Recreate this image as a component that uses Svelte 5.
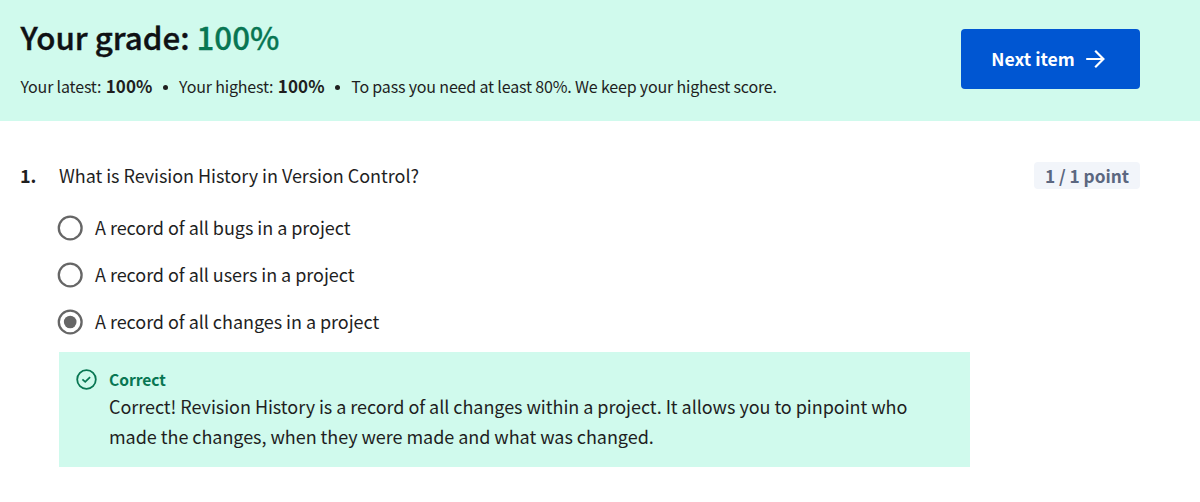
<script>
  const options = ['A record of all bugs in a project', 'A record of all users in a project', 'A record of all changes in a project'];
  const selected = 2;
</script>

<div class="page">
  <header>
    <div class="grade">
      <h1>Your grade: <span>100%</span></h1>
      <div class="summary"><span>Your latest: <b>100%</b></span><i></i><span>Your highest: <b>100%</b></span><i></i><span>To pass you need at least 80%. We keep your highest score.</span></div>
    </div>
    <button class="next"><span>Next item</span>
      <svg width="19" height="20" viewBox="0 0 19 20" fill="none" stroke="currentColor" stroke-width="2.2"><path d="M0.2 10H17M9.2 1.8l8.2 8.2-8.2 8.2" /></svg>
    </button>
  </header>
  <main>
    <div class="num">1.</div>
    <section>
      <div class="prompt"><span>What is Revision History in Version Control?</span><span class="points">1 / 1 point</span></div>
      <div class="options">
        {#each options as option, i}
          <div class="option">
            <svg width="26" height="26" viewBox="0 0 26 26"><circle cx="13.2" cy="13" r="11.4" fill="none" stroke="#666" stroke-width="2.3" />{#if i === selected}<circle cx="13.2" cy="13" r="6.3" fill="#666" />{/if}</svg>
            <span>{option}</span>
          </div>
        {/each}
      </div>
      <div class="feedback">
        <svg width="21" height="21" viewBox="0 0 21 21" fill="none" stroke="#087653" stroke-width="1.8"><circle cx="10.5" cy="10.5" r="9.3" /><path d="M6.4 10.3l2.8 2.5 4.9-4.6" /></svg>
        <div><strong>Correct</strong>
          <p>Correct! Revision History is a record of all changes within a project. It allows you to pinpoint who<br />made the changes, when they were made and what was changed.</p>
        </div>
      </div>
    </section>
  </main>
</div>

<style>
  :global(body) { background: #fff; }
  .page { width: 1200px; height: 502px; overflow: hidden; box-sizing: border-box; font-family: "Noto Sans CJK SC", sans-serif; color: #1f1f1f; font-size: 18px; letter-spacing: -0.043px; white-space: nowrap; }
  header { height: 121px; box-sizing: border-box; background: #d0faed; display: flex; justify-content: space-between; padding: 0 60px 0 20.5px; }
  h1 { margin: 17px 0 0; font-size: 31.3px; line-height: 40px; font-weight: 500; color: #0f1114; letter-spacing: 0; -webkit-text-stroke: 0.4px #0f1114; }
  h1 span { color: #087653; -webkit-text-stroke: 0.3px #087653; }
  .summary { margin: 17px 0 0; font-size: 16px; line-height: 24px; letter-spacing: -0.17px; display: flex; align-items: center; }
  .summary > span { height: 24px; }
  b { font-size: 17px; letter-spacing: 0.1px; line-height: 20px; margin-left: 1px; }
  i { width: 5px; height: 5px; border-radius: 50%; background: #1f1f1f; margin: 2px 11px 0 10.5px; }
  .next { margin-top: 29px; width: 179px; height: 60px; border: 0; border-radius: 4px; background: #0056d2; color: #fff; font: 700 17.6px "Noto Sans CJK SC", sans-serif; display: flex; align-items: center; justify-content: center; gap: 11px; padding: 0 5px 0 0; }
  .next span { margin-top: -2px; }
  main { display: flex; padding: 39px 60px 0 20px; }
  .num { width: 39px; font-weight: 700; line-height: 30px; }
  section { flex: 1; }
  .prompt { display: flex; justify-content: space-between; line-height: 30px; }
  .points { height: 27px; line-height: 27px; margin-top: 2px; width: 106px; text-align: center; background: #f2f5fa; border-radius: 4px; color: #5b6780; font-size: 17.3px; font-weight: 700; }
  .options { padding-top: 14px; }
  .option { display: flex; align-items: center; height: 47px; gap: 12px; margin-left: -2px; }
  .option span { margin-top: -2px; }
  .feedback { margin-top: 7px; width: 911px; height: 115px; box-sizing: border-box; background: #d0faed; display: flex; padding: 12px 17px; gap: 12px; }
  .feedback > svg { margin-top: 5px; }
  strong { color: #087653; display: block; font-size: 15.6px; line-height: 28px; padding-top: 1px; }
  p { margin: -2px 0 0; line-height: 30px; }
</style>
